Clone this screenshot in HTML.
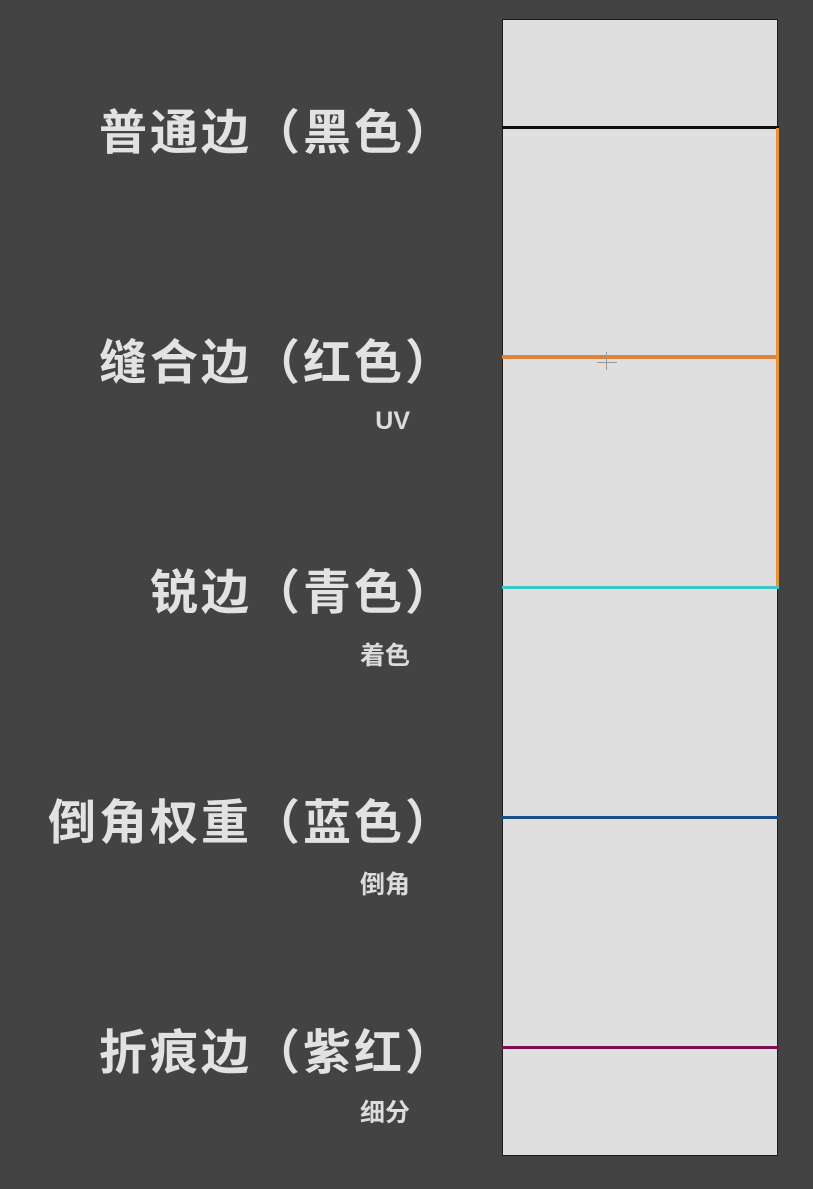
<!DOCTYPE html>
<html><head><meta charset="utf-8"><style>
body{margin:0;width:813px;height:1189px;background:#434343;position:relative;overflow:hidden;font-family:"Liberation Sans","Noto Sans CJK SC",sans-serif;}
.t{position:absolute;right:357px;color:#e2e2e2;font-weight:bold;font-size:48px;line-height:56px;white-space:nowrap;letter-spacing:3px}
.s{position:absolute;right:403px;color:#dcdcdc;font-weight:bold;font-size:25px;line-height:28px;white-space:nowrap}
.p{position:absolute;left:502px;top:19px;width:274px;height:1135px;background:#dfdfdf;border:1.5px solid #1a1a1a}
.l{position:absolute;left:502px;width:277px}
</style></head><body>
<div class="p"></div>
<div class="l" style="top:126px;height:3px;background:#111"></div>
<div class="l" style="top:355px;height:4px;background:#e0833a"></div>
<div style="position:absolute;left:776px;top:128px;width:3px;height:460px;background:#e6962e"></div>
<div class="l" style="top:586px;height:3px;background:#3fc6c6"></div>
<div class="l" style="top:816px;height:3px;background:#1a4f8a"></div>
<div class="l" style="top:1046px;height:3px;background:#7a1050"></div>
<div style="position:absolute;left:606px;top:352px;width:1px;height:18px;background:#999"></div>
<div style="position:absolute;left:597px;top:362px;width:20px;height:1px;background:#999"></div>
<div class="t" style="top:106px">普通边（黑色）</div>
<div class="t" style="top:336px">缝合边（红色）</div>
<div class="s" style="top:407px">UV</div>
<div class="t" style="top:566px">锐边（青色）</div>
<div class="s" style="top:642px">着色</div>
<div class="t" style="top:796px">倒角权重（蓝色）</div>
<div class="s" style="top:871px">倒角</div>
<div class="t" style="top:1026px">折痕边（紫红）</div>
<div class="s" style="top:1099px">细分</div>
</body></html>
